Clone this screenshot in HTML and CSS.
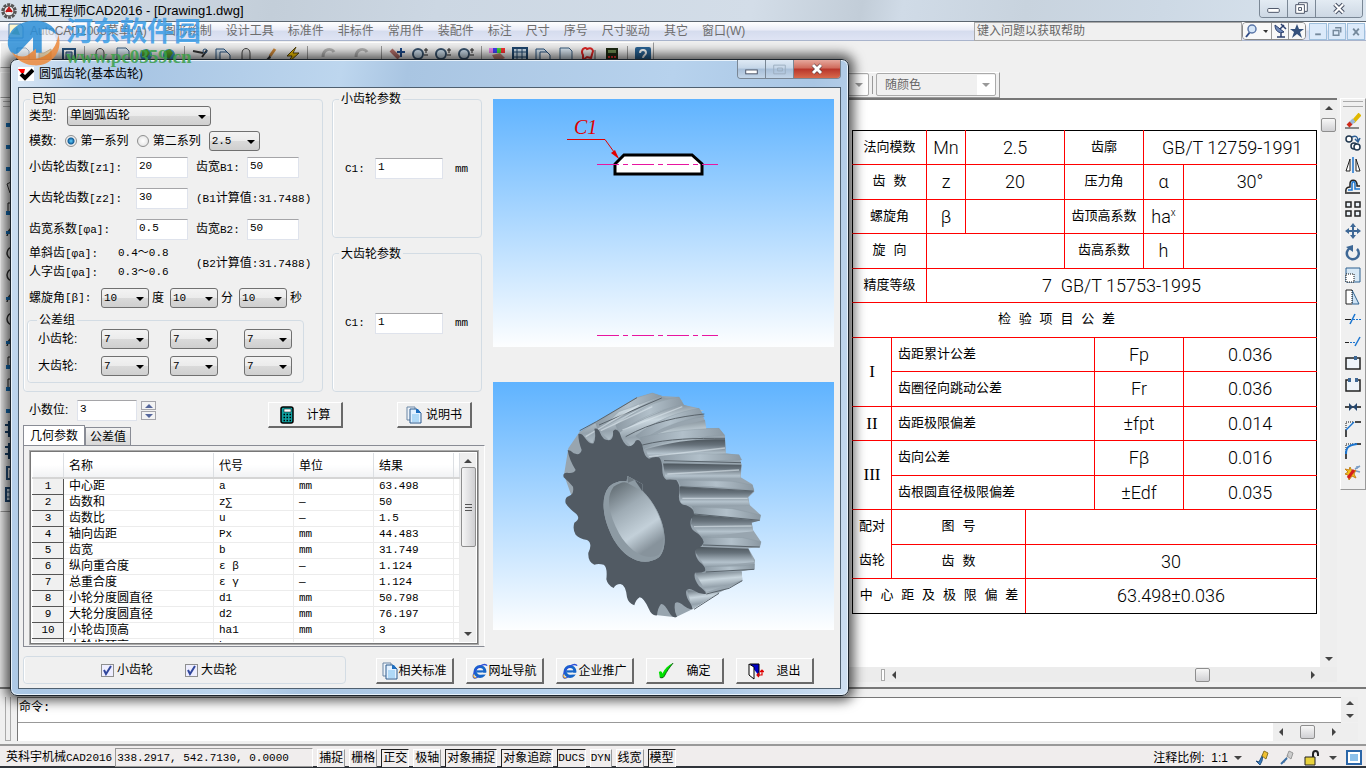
FILE: index.html
```html
<!DOCTYPE html>
<html lang="zh-CN">
<head>
    <meta charset="UTF-8">
    <title>机械工程师CAD2016 - [Drawing1.dwg]</title>
    <link rel="stylesheet" href="styles.css">
</head>
<body>
    <!-- shared icons -->
    <svg class="defs" aria-hidden="true">
        <symbol id="i-new" viewBox="0 0 16 16"><path d="M2 1h9l3 3v11H2z" fill="#dceaf5" stroke="#3b5e80"/></symbol>
        <symbol id="i-open" viewBox="0 0 16 16"><path d="M1 6h5l7-4v12H1z" fill="#d9a441" stroke="#8a5a14"/></symbol>
        <symbol id="i-save" viewBox="0 0 16 16"><path d="M2 2h12v12H2z" fill="#fff" stroke="#27517c" stroke-width="2"/><path d="M5 5h6v9H5z" fill="#9db8d2" stroke="#27517c"/></symbol>
        <symbol id="i-print" viewBox="0 0 16 16"><path d="M4 6c0-6 8-6 8 0v8H4z" fill="#ddd" stroke="#444"/></symbol>
        <symbol id="i-globe" viewBox="0 0 16 16"><circle cx="8" cy="8" r="6" fill="#3d9bd6"/><path d="M4 4l5-2 3 4-4 6-4-3z" fill="#58a42c"/></symbol>
        <symbol id="i-cut" viewBox="0 0 16 16"><path d="M1 4l10 2M10 10L15 3" stroke="#333" stroke-width="2"/><circle cx="13" cy="4" r="2" fill="none" stroke="#27517c"/></symbol>
        <symbol id="i-copy" viewBox="0 0 16 16"><path d="M1 2h8l3 3v8H1z" fill="#dceaf5" stroke="#27517c"/><path d="M5 5h7l3 3v8H5z" fill="#fff" stroke="#27517c"/></symbol>
        <symbol id="i-brush" viewBox="0 0 16 16"><path d="M14 2l-5 7" stroke="#d08a3a" stroke-width="3"/><path d="M9 8l-6 7 7-4z" fill="#333"/></symbol>
        <symbol id="i-bolt" viewBox="0 0 16 16"><path d="M12 0L3 9h5l-4 7 11-10H9z" fill="#f5c400" stroke="#55430a"/></symbol>
        <symbol id="i-undo" viewBox="0 0 16 16"><path d="M3 10c0-9 9-9 11-5" fill="none" stroke="#b5b5b5" stroke-width="3"/></symbol>
        <symbol id="i-pan" viewBox="0 0 16 16"><path d="M2 3l8 8" stroke="#b5706a" stroke-width="4"/><path d="M12 1v9M8 5h8" stroke="#1d4a8a" stroke-width="2"/></symbol>
        <symbol id="i-lens" viewBox="0 0 16 16"><circle cx="6" cy="7" r="5" fill="#cfe0ee" stroke="#38536e" stroke-width="2"/><path d="M12 3h4M14 1v5M12 8h4" stroke="#222"/></symbol>
        <symbol id="i-pal" viewBox="0 0 16 16"><path d="M0 1h4v5H0z" fill="#e8e"/><path d="M4 1h4v5H4z" fill="#44f"/><path d="M8 1h4v5H8z" fill="#4d4"/><path d="M12 1h4v5h-4z" fill="#f33"/><path d="M3 8l8-2 5 5-9 4z" fill="#c48476"/></symbol>
        <symbol id="i-grid" viewBox="0 0 16 16"><path d="M1 1h14v13H1z" fill="#cfe0ee" stroke="#1e466e" stroke-width="2"/><path d="M1 5h14M5 1v13M10 1v13M1 10h14" stroke="#1e466e"/></symbol>
        <symbol id="i-cloud" viewBox="0 0 16 16"><path d="M2 2q3-2 4 0q5-2 6 2l-2 7-4-1-4 3V8Q0 5 2 2z" fill="none" stroke="#e02424" stroke-width="2"/><path d="M14 3v9" stroke="#555"/></symbol>
        <symbol id="i-dcalc" viewBox="0 0 16 16"><path d="M2 1h12v14H2z" fill="#1e2a12"/><path d="M4 3h8v3H4z" fill="#6d8a50"/><path d="M4 9h2v2H4zM7 9h2v2H7zM10 9h2v2h-2z" fill="#e33"/></symbol>
        <symbol id="i-help" viewBox="0 0 16 16"><rect width="16" height="16" rx="2" fill="#2a6496"/><path d="M5 6c0-4 6-4 6 0 0 2-3 2-3 5" fill="none" stroke="#fff" stroke-width="2"/></symbol>
        <symbol id="i-doc" viewBox="0 0 16 18"><path d="M1 1h8v13H1z" fill="#eef4fa" stroke="#6b86a5"/><path d="M4 3h7l4 4v10H4z" fill="#e3f1ff" stroke="#2c5a8c"/><path d="M10 3h2l3 4h-5z" fill="#1f6fc0"/><path d="M6 9h7M6 11h7M6 13h7M6 15h7" stroke="#7cc0ee"/></symbol>
        <symbol id="i-calc" viewBox="0 0 14 18"><rect x="1" y="1" width="12" height="16" rx="2" fill="#0fa3a3" stroke="#000" stroke-width="1.500"/><path d="M4 3h7v3H4z" fill="#fff" stroke="#000" stroke-width="0.500"/><path d="M3.500 8.500h8M3.500 11.500h8M3.500 14.500h8" stroke="#000" stroke-width="1.500" stroke-dasharray="1.500 1.500"/></symbol>
        <symbol id="i-ie" viewBox="0 0 18 18"><circle cx="9" cy="9.500" r="5.500" fill="none" stroke="#1565c8" stroke-width="3.500"/><path d="M5 9.500h10" stroke="#1565c8" stroke-width="2.500"/><path d="M11 12h6" stroke="#f0f0f0" stroke-width="2"/><path d="M17 3c-3-4-13 2-15 9-2 6 2 6 5 3" fill="none" stroke="#2b4fd8" stroke-width="1.600"/><path d="M2 13c-1 3 1 4 3 3" fill="none" stroke="#d4a54a" stroke-width="1.500"/></symbol>
        <symbol id="i-ok" viewBox="0 0 18 18"><path d="M1 10c2-2 4 0 4 2 3-6 6-9 12-12-4 5-7 9-10 15-1 2-4 2-5 1z" fill="#00e000"/><path d="M17 0c-4 5-7 9-10 15-1 2-4 2-5 1" fill="none" stroke="#064d06"/></symbol>
        <symbol id="i-exit" viewBox="0 0 16 18"><path d="M2 2h9v12" fill="#0000c8" stroke="#000"/><path d="M1 2l5 3v12l-5-4z" fill="#fff" stroke="#000"/><path d="M9 13h5V8M11 11l-2 2 2 2M12 10l2-2 2 2" stroke="#e00000" stroke-width="1.200" fill="none"/></symbol>
        <symbol id="i-line" viewBox="0 0 16 16"><path d="M3 12L13 3" stroke="#222"/><path d="M1 10h4v4H1z" fill="#1670b8"/></symbol>
        <symbol id="i-circ" viewBox="0 0 16 16"><circle cx="8" cy="8" r="6" fill="none" stroke="#333" stroke-width="1.500"/></symbol>
        <symbol id="i-pent" viewBox="0 0 16 16"><path d="M2 5l6-3 6 4-2 8H5z" fill="#ddd" stroke="#333"/></symbol>
        <symbol id="i-rect" viewBox="0 0 16 16"><path d="M3 2h11v9H3z" fill="none" stroke="#222"/><path d="M1 10h4v4H1z" fill="#1670b8"/></symbol>
        <symbol id="i-arc" viewBox="0 0 16 16"><path d="M2 13C3 5 8 3 14 3" fill="none" stroke="#333" stroke-width="1.500"/><path d="M1 8h4v3H1z" fill="#1670b8"/></symbol>
        <symbol id="i-hatch" viewBox="0 0 16 16"><path d="M4 0v16M0 4h16M0 11h16M11 0v16" stroke="#173f66" stroke-width="2"/></symbol>
    </svg>

    <div class="app">
        <header class="titlebar">
            <svg class="gear-ico" viewBox="0 0 16 16"><circle cx="8" cy="8" r="6.500" fill="#ddd" stroke="#555" stroke-width="2.500" stroke-dasharray="3 1"/><circle cx="8" cy="8" r="5" fill="#eee" stroke="#333"/><path d="M5 9l3-4 3 4M5 8h6" fill="none" stroke="#c01818" stroke-width="2"/></svg>
            <span class="app-name">机械工程师CAD2016 - [Drawing1.dwg]</span>
            <div class="win-btns">
                <button aria-label="最小化"><svg viewBox="0 0 28 16"><rect x="8" y="8" width="12" height="4" rx="1" fill="#fff" stroke="#4a5366"/></svg></button>
                <button aria-label="还原"><svg viewBox="0 0 28 16"><path d="M11 2h9v9h-9z" fill="#fff" stroke="#4a5366"/><path d="M8 4h9v9H8z" fill="#fff" stroke="#4a5366"/><path d="M11 7h3v3h-3z" fill="none" stroke="#4a5366"/></svg></button>
                <button class="wide" aria-label="关闭"><svg viewBox="0 0 28 16"><path d="M10 4l8 8M18 4l-8 8" stroke="#4a5366" stroke-width="4"/><path d="M10 4l8 8M18 4l-8 8" stroke="#fff" stroke-width="2"/></svg></button>
            </div>
        </header>

        <nav class="menubar">
            <svg class="mdi-ico" viewBox="0 0 16 16"><path d="M1 1h12l2 3v11H1z" fill="#fff6cc" stroke="#3f6ea3"/><path d="M3 11l6-7 3 8z" fill="#7fa63a"/></svg>
            <a class="first" href="#">AutoCAD2008菜单(A)</a>
            <a href="#">图形绘制</a>
            <a href="#">设计工具</a>
            <a href="#">标准件</a>
            <a href="#">非标件</a>
            <a href="#">常用件</a>
            <a href="#">装配件</a>
            <a href="#">标注</a>
            <a href="#">尺寸</a>
            <a href="#">序号</a>
            <a href="#">尺寸驱动</a>
            <a href="#">其它</a>
            <a href="#">窗口(W)</a>
            <input class="help-search" type="text" placeholder="键入问题以获取帮助" aria-label="帮助搜索">
            <div class="help-btns">
                <button class="find" aria-label="搜索"><svg viewBox="0 0 28 16"><path d="M7 9l-4 5" stroke="#2e4a86" stroke-width="2"/><circle cx="9" cy="6" r="4" fill="#d5e6f8" stroke="#5a76a8" stroke-width="1.500"/><path d="M20 7h5l-2 3z" fill="#333"/></svg></button>
                <button aria-label="通讯中心"><svg viewBox="0 0 16 16"><path d="M3 2c0 6 4 9 9 7z" fill="#6d87b8" stroke="#2c406e"/><path d="M8 6l4-4M9 1l5 5M5 14h8M9 10v4" stroke="#2c406e" stroke-width="1.500"/></svg></button>
                <button aria-label="收藏夹"><svg viewBox="0 0 16 16"><path d="M8 1l2 5h5l-4 3 2 6-5-4-5 4 2-6-4-3h5z" fill="#34507c"/></svg></button>
            </div>
            <div class="mdi-btns">
                <button aria-label="最小化窗口"><svg viewBox="0 0 16 16"><path d="M5 11h6" stroke="#75899c" stroke-width="2"/></svg></button>
                <button aria-label="还原窗口"><svg viewBox="0 0 16 16"><path d="M6 4h6v5M4 7h6v5H4z" fill="none" stroke="#75899c" stroke-width="1.500"/></svg></button>
                <button aria-label="关闭窗口"><svg viewBox="0 0 16 16"><path d="M5 5l6 7M11 5l-6 7" stroke="#75899c" stroke-width="2"/></svg></button>
            </div>
        </nav>

        <div class="toolbars">
            <div class="toolbar std">
                <svg><use href="#i-new"/></svg><svg><use href="#i-open"/></svg><svg><use href="#i-save"/></svg><i></i>
                <svg><use href="#i-print"/></svg><svg><use href="#i-new"/></svg><svg><use href="#i-globe"/></svg><svg><use href="#i-globe"/></svg><i></i>
                <svg><use href="#i-cut"/></svg><svg><use href="#i-copy"/></svg><svg><use href="#i-print"/></svg><svg><use href="#i-brush"/></svg><svg><use href="#i-bolt"/></svg><i></i>
                <svg class="wide"><use href="#i-undo"/></svg><svg class="wide"><use href="#i-undo"/></svg><i></i>
                <svg><use href="#i-pan"/></svg><svg><use href="#i-lens"/></svg><svg><use href="#i-lens"/></svg><svg><use href="#i-lens"/></svg><i></i>
                <svg><use href="#i-pal"/></svg><svg><use href="#i-grid"/></svg><svg><use href="#i-copy"/></svg><svg><use href="#i-new"/></svg><svg><use href="#i-cloud"/></svg><svg><use href="#i-dcalc"/></svg><i></i>
                <svg><use href="#i-help"/></svg>
            </div>
            <div class="toolbar props">
                <select class="combo" disabled aria-label="图层"><option>0</option></select>
                <i></i>
                <select class="combo color" disabled aria-label="颜色"><option>随颜色</option></select>
            </div>
        </div>

        <main class="workspace">
            <aside class="vtools draw">
                <b></b>
                <svg><use href="#i-line"/></svg><svg><use href="#i-line"/></svg><svg><use href="#i-line"/></svg><svg><use href="#i-pent"/></svg><svg><use href="#i-rect"/></svg><svg><use href="#i-arc"/></svg><svg><use href="#i-circ"/></svg><svg><use href="#i-circ"/></svg><svg><use href="#i-arc"/></svg><svg><use href="#i-circ"/></svg><svg><use href="#i-arc"/></svg><svg><use href="#i-rect"/></svg><svg><use href="#i-rect"/></svg><svg><use href="#i-line"/></svg><svg><use href="#i-hatch"/></svg><svg><use href="#i-hatch"/></svg><svg><use href="#i-save"/></svg><svg><use href="#i-grid"/></svg>
            </aside>

            <section class="drawing">
                <div class="canvas">
                    <table class="cad">
                        <colgroup><col class="c39"><col class="c35"><col class="c39"><col class="c60"><col class="c39"><col class="c30"><col class="c49"><col class="c40"><col></colgroup>
                        <tr><th colspan="2">法向模数</th><td>Mn</td><td colspan="2">2.5</td><th colspan="2">齿廓</th><td colspan="2">&nbsp;GB/T 12759-1991</td></tr>
                        <tr><th colspan="2">齿 数</th><td>z</td><td colspan="2">20</td><th colspan="2">压力角</th><td>α</td><td>30°</td></tr>
                        <tr><th colspan="2">螺旋角</th><td>β</td><td colspan="2"></td><th colspan="2">齿顶高系数</th><td>ha<sup>x</sup></td><td></td></tr>
                        <tr><th colspan="2">旋 向</th><td colspan="3"></td><th colspan="2">齿高系数</th><td>h</td><td></td></tr>
                        <tr><th colspan="2">精度等级</th><td colspan="7">7&nbsp; GB/T 15753-1995</td></tr>
                        <tr><th class="head" colspan="9">检 验 项 目 公 差</th></tr>
                        <tr><th class="roman" rowspan="2">I</th><th class="left" colspan="5">齿距累计公差</th><td colspan="2">Fp</td><td>0.036</td></tr>
                        <tr><th class="left" colspan="5">齿圈径向跳动公差</th><td colspan="2">Fr</td><td>0.036</td></tr>
                        <tr><th class="roman">II</th><th class="left" colspan="5">齿距极限偏差</th><td colspan="2">±fpt</td><td>0.014</td></tr>
                        <tr><th class="roman" rowspan="2">III</th><th class="left" colspan="5">齿向公差</th><td colspan="2">Fβ</td><td>0.016</td></tr>
                        <tr><th class="left" colspan="5">齿根圆直径极限偏差</th><td colspan="2">±Edf</td><td>0.035</td></tr>
                        <tr><th class="pair" rowspan="2">配对<br>齿轮</th><th colspan="3">图 号</th><td colspan="5"></td></tr>
                        <tr><th colspan="3">齿 数</th><td colspan="5">30</td></tr>
                        <tr><th colspan="4">中 心 距 及 极 限 偏 差</th><td colspan="5">63.498±0.036</td></tr>
                    </table>
                </div>
                <div class="vscroll"><span class="arr up"></span><span class="thumb"></span><span class="arr down"></span></div>
                <div class="hscroll"><span class="split"></span><span class="arr lt"></span><span class="thumb"></span><span class="arr rt"></span></div>
            </section>

            <aside class="vtools modify">
                <b></b>
                <svg viewBox="0 0 16 16"><path d="M15 1l-7 8" stroke="#e0b800" stroke-width="4"/><path d="M9 7l-4 4" stroke="#9cb8d8" stroke-width="4"/><path d="M6 10l-3 3" stroke="#d02a1a" stroke-width="4"/><path d="M0 15h14" stroke="#222"/></svg>
                <svg viewBox="0 0 16 16"><circle cx="4" cy="4" r="3" fill="#fff" stroke="#22384f" stroke-width="1.500"/><circle cx="9" cy="11" r="3" fill="#fff" stroke="#22384f" stroke-width="1.500"/><circle cx="12" cy="12" r="3" fill="#fff" stroke="#22384f" stroke-width="1.500"/><path d="M7 2c4-2 6 0 6 4M10 4l3 3 2-4" fill="none" stroke="#2c5f96" stroke-width="1.500"/></svg>
                <svg viewBox="0 0 16 16"><path d="M5 2v12H1zM11 2v12h4z" fill="#fff" stroke="#222"/><path d="M8 0v16" stroke="#1b75d0" stroke-width="1.500"/></svg>
                <svg viewBox="0 0 16 16"><path d="M0 14h15M1 13c-1-5 3-5 4-5V5c0-5 6-5 7 0v2h3" fill="none" stroke="#222" stroke-width="1.500"/><path d="M3 11h4V5c0-3 3-3 3 0v5h5" fill="none" stroke="#1b75d0" stroke-width="1.500"/></svg>
                <svg viewBox="0 0 16 16"><path d="M1 1h5v5H1zM10 1h5v5h-5zM1 10h5v5H1zM10 10h5v5h-5z" fill="#eaf2fa" stroke="#222" stroke-width="1.500"/></svg>
                <svg viewBox="0 0 16 16"><path d="M8 2v12M2 8h12" stroke="#3e6896" stroke-width="2"/><path d="M8 0l3 4H5zM8 16l3-4H5zM0 8l4-3v6zM16 8l-4-3v6z" fill="#3e6896"/></svg>
                <svg viewBox="0 0 16 16"><path d="M5 3a6 6 0 1 0 7 1" fill="none" stroke="#3e6896" stroke-width="2.500"/><path d="M1 2l7-2v7z" fill="#3e6896"/></svg>
                <svg viewBox="0 0 16 16"><path d="M1 1h14v14H1z" fill="#d8e9f6" stroke="#2c6190"/><path d="M1 7h8v8H1z" fill="#fff" stroke="#111" stroke-dasharray="1 1"/></svg>
                <svg viewBox="0 0 16 16"><path d="M7 1l7 14H7z" fill="#cfe3f4" stroke="#2c6190"/><path d="M7 1H1v14h6" fill="#fff" stroke="#222"/><path d="M7 1v14" stroke="#111" stroke-dasharray="1 1"/></svg>
                <svg viewBox="0 0 16 16"><path d="M0 8.500h6" stroke="#222"/><path d="M8 8.500h8" stroke="#1b75d0" stroke-dasharray="2 1"/><path d="M5 13L10 3" stroke="#1b75d0" stroke-width="1.500"/></svg>
                <svg viewBox="0 0 16 16"><path d="M0 9.500h4" stroke="#222"/><path d="M5 9.500h6" stroke="#1b75d0" stroke-dasharray="2 1"/><path d="M10 13l5-9" stroke="#1b75d0" stroke-width="1.500"/></svg>
                <svg viewBox="0 0 16 16"><path d="M1 3h14v11H1z" fill="#eef4fa" stroke="#222" stroke-width="1.500"/><path d="M9 1h3v4H9z" fill="#3e6896"/></svg>
                <svg viewBox="0 0 16 16"><path d="M4 3H1v11h14V3h-3" fill="#eef4fa" stroke="#222" stroke-width="1.500"/><path d="M3 1h3v4H3zM10 1h3v4h-3z" fill="#3e6896"/></svg>
                <svg viewBox="0 0 16 16"><path d="M0 8h16" stroke="#111" stroke-width="1.500"/><path d="M4 4l4 4-4 4zM12 4L8 8l4 4z" fill="#24476e"/></svg>
                <svg viewBox="0 0 16 16"><path d="M1 16V9M10 1h6" stroke="#111" stroke-width="1.500"/><path d="M1 9V1h8" fill="none" stroke="#111" stroke-dasharray="1 1"/><path d="M1 9l8-8" stroke="#1b75d0" stroke-width="1.500"/></svg>
                <svg viewBox="0 0 16 16"><path d="M1 16V9M10 1h6" stroke="#111" stroke-width="1.500"/><path d="M1 9V1h8" fill="none" stroke="#111" stroke-dasharray="1 1"/><path d="M1 11C1 4 4 2 12 1" fill="none" stroke="#1b75d0" stroke-width="2"/></svg>
                <svg viewBox="0 0 16 16"><path d="M0 4l4 1 1-3 2 4 4-1-2 4 2 4-4-2-3 4-1-5-3-1 3-2z" fill="#f3c21c" stroke="#c4831c"/><path d="M3 13L9 5" stroke="#d42020" stroke-width="3"/><path d="M10 4l5-3M11 6l4 1M12 1v3" stroke="#7a9cc4" stroke-width="1.500"/></svg>
            </aside>
        </main>

        <section class="command">
            <b class="grip"></b>
            <div class="cmd-box">
                <label for="cmd">命令:</label>
                <input id="cmd" type="text">
            </div>
            <div class="cmd-scroll">
                <span class="arr up"></span><span class="arr down"></span>
            </div>
            <div class="cmd-hscroll"><span class="arr lt"></span><span class="thumb"></span><span class="arr rt"></span></div>
        </section>

        <footer class="status">
            <span>英科宇机械<span class="num">CAD2016</span></span>
            <output class="coords">338.2917, 542.7130, 0.0000</output>
            <div class="modes">
                <button>捕捉</button>
                <button>栅格</button>
                <button class="on">正交</button>
                <button>极轴</button>
                <button class="on">对象捕捉</button>
                <button class="on">对象追踪</button>
                <button class="on num">DUCS</button>
                <button class="num">DYN</button>
                <button>线宽</button>
                <button class="on">模型</button>
            </div>
            <span class="scale">注释比例:&nbsp; 1:1 <span class="arr down"></span></span>
            <div class="tray">
                <svg viewBox="0 0 16 16"><path d="M9 4l-4 8-3-1 4 4 2-4z" fill="#3b7fc4" stroke="#24507e"/><path d="M10 1l4 2-2 6-4-3z" fill="#f0c030" stroke="#8b7420"/></svg>
                <svg viewBox="0 0 16 16"><path d="M10 1l4 2-2 6-4-3zM9 5l-4 8" fill="#ccc" stroke="#999"/><path d="M2 14l6-6" stroke="#3b6fa4" stroke-width="2"/></svg>
                <svg viewBox="0 0 16 16"><path d="M9 7V4c0-4 5-4 5 0v2" fill="none" stroke="#222" stroke-width="2"/><path d="M1 7h10v8H1z" fill="#e8d23c" stroke="#222"/></svg>
                <span class="arr down"></span>
                <svg viewBox="0 0 16 16"><path d="M1 1h14v13H1z" fill="#fff" stroke="#2b66a8" stroke-width="2"/><path d="M4 4h8v7H4z" fill="#8cc0ea"/></svg>
            </div>
        </footer>
    </div>

    <!-- gear dialog -->
    <div class="dialog" role="dialog" aria-labelledby="dlg-title">
        <div class="dlg-title">
            <svg viewBox="0 0 16 14"><path d="M0 0h16v14H0z" fill="#fff"/><path d="M3 7l4 4 8-8" fill="none" stroke="#000" stroke-width="4"/><path d="M0 2h7l-1 4H3z" fill="#f00"/></svg>
            <span id="dlg-title">圆弧齿轮(基本齿轮)</span>
            <div class="win-btns">
                <button aria-label="最小化"><svg viewBox="0 0 28 18"><rect x="8" y="10" width="12" height="4" fill="#fff" stroke="#4a5366"/></svg></button>
                <button disabled aria-label="最大化"><svg viewBox="0 0 28 18"><path d="M8 5h12v9H8zM12 8h5v3h-5z" fill="none" stroke="#9caebf"/></svg></button>
                <button class="wide close" aria-label="关闭"><svg viewBox="0 0 28 18"><path d="M10 5l8 8M18 5l-8 8" stroke="#54363a" stroke-width="4"/><path d="M10 5l8 8M18 5l-8 8" stroke="#fff" stroke-width="3"/></svg></button>
            </div>
        </div>

        <form class="client">
            <div class="cols">
                <div class="left">
                    <div class="params">
                        <fieldset class="known">
                            <legend>已知</legend>
                            <div class="row type">
                                <label for="type">类型:</label>
                                <select id="type"><option>单圆弧齿轮</option></select>
                            </div>
                            <div class="row modulus">
                                <span>模数:</span>
                                <label><input type="radio" name="series" checked>第一系列</label>
                                <label><input type="radio" name="series">第二系列</label>
                                <select aria-label="模数"><option>2.5</option></select>
                            </div>
                            <div class="teeth">
                                <label for="z1">小齿轮齿数<span class="num">[z1]:</span></label>
                                <input id="z1" value="20">
                                <label class="second" for="b1">齿宽<span class="num">B1:</span></label>
                                <input id="b1" value="50">
                                <label for="z2">大齿轮齿数<span class="num">[z2]:</span></label>
                                <input id="z2" value="30">
                                <span class="second calc"><span class="num">(B1</span>计算值<span class="num">:31.7488)</span></span>
                                <label for="phi">齿宽系数<span class="num">[φa]:</span></label>
                                <input id="phi" value="0.5">
                                <label class="second" for="b2">齿宽<span class="num">B2:</span></label>
                                <input id="b2" value="50">
                            </div>
                            <div class="hints">
                                <span>单斜齿<span class="num">[φa]:</span></span><span class="num">0.4～0.8</span>
                                <span class="calc"><span class="num">(B2</span>计算值<span class="num">:31.7488)</span></span>
                                <span>人字齿<span class="num">[φa]:</span></span><span class="num">0.3～0.6</span>
                            </div>
                            <div class="row helix">
                                <label for="deg">螺旋角<span class="num">[β]:</span></label>
                                <select id="deg"><option>10</option></select><span>度</span>
                                <select aria-label="分"><option>10</option></select><span>分</span>
                                <select aria-label="秒"><option>10</option></select><span>秒</span>
                            </div>
                            <fieldset class="group">
                                <legend>公差组</legend>
                                <span>小齿轮:</span>
                                <select aria-label="小齿轮 公差组 1"><option>7</option></select>
                                <select aria-label="小齿轮 公差组 2"><option>7</option></select>
                                <select aria-label="小齿轮 公差组 3"><option>7</option></select>
                                <span>大齿轮:</span>
                                <select aria-label="大齿轮 公差组 1"><option>7</option></select>
                                <select aria-label="大齿轮 公差组 2"><option>7</option></select>
                                <select aria-label="大齿轮 公差组 3"><option>7</option></select>
                            </fieldset>
                        </fieldset>
                        <div class="side">
                            <fieldset>
                                <legend>小齿轮参数</legend>
                                <div class="row"><label class="num" for="c1a">C1:</label><input id="c1a" value="1"><span class="num">mm</span></div>
                            </fieldset>
                            <fieldset>
                                <legend>大齿轮参数</legend>
                                <div class="row"><label class="num" for="c1b">C1:</label><input id="c1b" value="1"><span class="num">mm</span></div>
                            </fieldset>
                        </div>
                    </div>

                    <div class="row actions">
                        <label for="prec">小数位:</label>
                        <input id="prec" value="3">
                        <div class="spin">
                            <button type="button" aria-label="增加"><span class="arr up"></span></button>
                            <button type="button" aria-label="减少"><span class="arr down"></span></button>
                        </div>
                        <button type="button" class="btn calc-btn"><svg><use href="#i-calc"/></svg>计算</button>
                        <button type="button" class="btn"><svg><use href="#i-doc"/></svg>说明书</button>
                    </div>

                    <div class="tabs" role="tablist">
                        <button type="button" role="tab" aria-selected="true">几何参数</button>
                        <button type="button" role="tab" aria-selected="false">公差值</button>
                    </div>
                    <div class="panel">
                        <div class="list">
                            <div class="rows">
                                <table class="grid">
                                    <thead>
                                        <tr><th class="w-no"></th><th class="w-name">名称</th><th class="w-col">代号</th><th class="w-col">单位</th><th class="w-col">结果</th><th></th></tr>
                                    </thead>
                                    <tbody>
                                        <tr><th>1</th><td>中心距</td><td>a</td><td>mm</td><td>63.498</td><td></td></tr>
                                        <tr><th>2</th><td>齿数和</td><td>z∑</td><td>—</td><td>50</td><td></td></tr>
                                        <tr><th>3</th><td>齿数比</td><td>u</td><td>—</td><td>1.5</td><td></td></tr>
                                        <tr><th>4</th><td>轴向齿距</td><td>Px</td><td>mm</td><td>44.483</td><td></td></tr>
                                        <tr><th>5</th><td>齿宽</td><td>b</td><td>mm</td><td>31.749</td><td></td></tr>
                                        <tr><th>6</th><td>纵向重合度</td><td>ε β</td><td>—</td><td>1.124</td><td></td></tr>
                                        <tr><th>7</th><td>总重合度</td><td>ε γ</td><td>—</td><td>1.124</td><td></td></tr>
                                        <tr><th>8</th><td>小轮分度圆直径</td><td>d1</td><td>mm</td><td>50.798</td><td></td></tr>
                                        <tr><th>9</th><td>大轮分度圆直径</td><td>d2</td><td>mm</td><td>76.197</td><td></td></tr>
                                        <tr><th>10</th><td>小轮齿顶高</td><td>ha1</td><td>mm</td><td>3</td><td></td></tr>
                                        <tr><th></th><td>大轮齿顶高</td><td>ha2</td><td>mm</td><td>3</td><td></td></tr>
                                    </tbody>
                                </table>
                            </div>
                            <div class="vscroll"><span class="arr up"></span><span class="thumb"></span><span class="arr down"></span></div>
                        </div>
                    </div>
                </div>

                <div class="previews">
                    <svg viewBox="0 0 341 248" role="img" aria-label="齿轮简图">
                        <text x="81" y="35" class="c1-text">C1</text>
                        <path d="M74 40.500h38l13 18" fill="none" stroke="#e00000"/>
                        <path d="M126 60l-8-6 4-3z" fill="#e00000"/>
                        <path d="M122 75V65l9-9h68l10 9v10z" fill="#fff" stroke="#000" stroke-width="3"/>
                        <path d="M104 65.500h121M104 236.500h121" stroke="#e815a0" stroke-dasharray="22 4 5 4"/>
                    </svg>
                    <svg viewBox="42 36 1023 744" role="img" aria-label="斜齿轮三维图">
                        <defs>
                            <linearGradient id="bore" x1="0" y1="0" x2="0.500" y2="1"><stop offset="0" stop-color="#596369"/><stop offset="0.400" stop-color="#9eabb4"/><stop offset="0.750" stop-color="#c3d0d9"/><stop offset="1" stop-color="#87939c"/></linearGradient>
                            <linearGradient id="gap" x1="0" y1="0" x2="0" y2="1"><stop offset="0" stop-color="#4c555c"/><stop offset="0.300" stop-color="#66717a"/><stop offset="0.750" stop-color="#b4c2cc"/><stop offset="1" stop-color="#8c99a3"/></linearGradient>
                            <linearGradient id="gap2" x1="0.400" y1="0" x2="0.600" y2="1"><stop offset="0" stop-color="#7b8790"/><stop offset="0.350" stop-color="#c9d6de"/><stop offset="0.700" stop-color="#95a2ac"/><stop offset="1" stop-color="#bccad3"/></linearGradient>
                            <linearGradient id="crest" x1="0" y1="0" x2="1" y2="0"><stop offset="0" stop-color="#8d9aa4"/><stop offset="0.500" stop-color="#b2c0ca"/><stop offset="1" stop-color="#8b98a2"/></linearGradient>
                        </defs>
                        <!-- body behind the teeth -->
                        <path d="M268 235L302 185 352 155 470 84 520 69 548 78 600 81 615 105 660 115 677 150 680 175 720 175 738 197 740 250 780 255 788 285 785 322 820 343 826 365 808 382 812 405 845 435 842 452 818 456 822 480 846 515 842 532 808 535 828 570 826 596 788 604 790 633 720 668 640 718 590 742 530 735 300 440 255 315z" fill="#98a5af"/>
                        <!-- tooth gaps -->
                        <path d="M302 190L352 158 520 72 545 78 355 175 340 220z" fill="url(#gap2)"/>
                        <path d="M358 180L548 82 612 92 415 182 390 210z" fill="url(#gap2)"/>
                        <path d="M418 190C500 140 560 120 615 105L675 122C580 140 530 175 482 208L458 230z" fill="url(#gap2)"/>
                        <path d="M490 215C550 180 610 165 678 150L682 178 735 190C660 198 600 220 548 262L510 265z" fill="url(#gap2)"/>
                        <path d="M500 238C580 215 650 205 738 208L740 250 550 262 510 265z" fill="url(#gap)"/>
                        <path d="M552 280L787 284 784 325 602 330 560 328z" fill="url(#gap)"/>
                        <path d="M602 350L824 364 806 382 812 408 642 410 605 400z" fill="url(#gap)"/>
                        <path d="M640 432L840 452 818 458 822 484 670 502 636 462z" fill="url(#gap)"/>
                        <path d="M650 530L808 536 826 576 680 592 650 548z" fill="url(#gap)"/>
                        <path d="M648 608L788 606 790 630 682 666z" fill="url(#gap2)"/>
                        <path d="M624 660L720 668 640 716z" fill="url(#gap2)"/>
                        <!-- crests -->
                        <g fill="url(#crest)" stroke="#87949e" stroke-width="1">
                            <path d="M350 160L470 84 520 69 548 78 420 125 358 182z"/>
                            <path d="M410 165C470 120 530 92 600 81L614 104C540 118 470 150 420 188z"/>
                            <path d="M470 198C530 150 600 125 660 115L676 140C600 150 540 175 490 212z"/>
                            <path d="M538 256C600 250 690 250 780 254L788 270C700 272 620 276 552 280z"/>
                            <path d="M484 202C560 185 650 176 720 175L737 196C650 200 560 212 494 236z"/>
                            <path d="M598 330L760 334 820 345 825 361 700 350 606 348z"/>
                            <path d="M640 410L760 416 845 435 842 450 740 440 650 434z"/>
                            <path d="M668 502L790 503 846 515 842 532 760 526 674 524z"/>
                            <path d="M676 590L790 588 826 582 826 597 770 604 682 606z"/>
                        </g>
                        <g fill="none" stroke="#59636b" stroke-width="3">
                            <path d="M302 182L352 155 474 83M360 165L548 84M440 200C520 155 600 140 676 132M490 225C570 205 650 205 738 205M555 272L786 278M604 350L824 363M645 432L842 451M672 525L842 531M680 606L826 598M682 672L750 655 790 632M645 718L720 670"/>
                        </g>
                        <g fill="none" stroke="#dce6ec" stroke-width="4" opacity="0.600">
                            <path d="M365 182L520 110M430 180L610 110M510 260L738 234M565 312L780 300M610 385L806 385M645 470L818 468M320 200L480 105"/>
                        </g>
                        <!-- front face -->
                        <path fill="#515a63" fill-rule="evenodd" d="M346 176Q358 172 364 190Q372 212 390 211Q404 210 402 184Q410 172 422 188Q432 222 448 229Q464 228 470 212Q482 204 490 226Q496 264 510 266Q526 258 540 262Q550 272 550 300Q550 322 562 329Q580 328 592 330Q606 348 600 376Q598 398 612 404Q632 406 642 420Q650 434 636 448Q630 470 646 484Q670 498 674 516Q672 530 652 536Q644 556 662 576Q682 590 678 604Q664 610 648 608Q642 624 660 648Q684 666 680 672Q664 674 646 662Q628 652 622 662Q618 676 634 700Q642 714 640 718Q626 718 608 702Q594 692 588 700Q584 722 594 740Q582 746 572 730Q556 700 546 702Q536 714 534 736Q518 738 510 718Q494 682 482 682Q470 690 466 706Q448 700 444 682Q440 644 424 642Q410 642 404 654Q386 646 382 628Q386 592 374 584Q358 580 346 584Q326 576 328 548Q342 520 324 510Q300 506 290 494Q280 478 286 458Q306 446 292 432Q266 412 260 400Q256 382 270 378Q286 372 282 350Q268 334 254 322Q250 308 264 308Q284 312 290 300Q270 268 266 240Q274 240 284 250Q304 258 308 240Q298 214 298 192Q308 188 318 204Q332 224 344 220Q352 204 346 176z
                            M390 350Q415 330 443 334L445 318L490 342V362C560 430 572 530 540 562C500 590 445 575 405 510C372 450 362 385 390 350z"/>
                        <path d="M390 350Q415 330 443 334L445 318L490 342V362C560 430 572 530 540 562C500 590 445 575 405 510C372 450 362 385 390 350z" fill="#8d9aa3"/>
                        <path d="M404 350Q430 332 444 338L490 364C556 430 568 520 540 554C500 575 452 545 420 490C388 430 380 380 404 350z" fill="url(#bore)"/>
                        <path d="M467 330l23 12v22z" fill="#515a63"/>
                        <path d="M445 318l22 12-20 8z" fill="#6f7a82"/>
                    </svg>
                </div>
            </div>

            <div class="bottom">
                <fieldset class="checks">
                    <label><input type="checkbox" checked>小齿轮</label>
                    <label><input type="checkbox" checked>大齿轮</label>
                </fieldset>
                <button type="button" class="btn tight"><svg><use href="#i-doc"/></svg>相关标准</button>
                <button type="button" class="btn tight"><svg><use href="#i-ie"/></svg>网址导航</button>
                <button type="button" class="btn tight"><svg><use href="#i-ie"/></svg>企业推广</button>
                <button type="button" class="btn"><svg><use href="#i-ok"/></svg>确定</button>
                <button type="button" class="btn"><svg><use href="#i-exit"/></svg>退出</button>
            </div>
        </form>
    </div>

    <div class="watermark">
        <svg viewBox="0 0 60 48"><circle cx="30" cy="24" r="23" fill="#fff" opacity="0.600"/><path d="M3 26C2 8 18 0 34 1c12 1 19 9 19 14-5-5-10-6-15-5v24h-9V18L14 34C8 38 4 32 3 26z" fill="#2c8fd8"/><path d="M55 15c6 18-8 34-26 32-12-1-19-8-22-14 5 5 11 6 16 4l9-7v10c12-1 22-11 23-25z" fill="#ee8a3c"/></svg>
        <div>
            <strong>河东软件园</strong>
            <span>www.pc0359.cn</span>
        </div>
    </div>
</body>
</html>
```
FILE: styles.css
```css
* { box-sizing: border-box; }
html, body { height: 100%; margin: 0; overflow: hidden; }
body { font: 12px/14px "Liberation Sans", "Noto Sans CJK SC", sans-serif; color: #000; background: #f0f0f0; }
button, input, select { font: inherit; color: inherit; margin: 0; padding: 0; border-radius: 0; }
.defs { display: none; }
.num { font-family: "Liberation Mono", "Noto Sans CJK SC", monospace; font-size: 11px; }

/* small triangles */
.arr { display: block; width: 0; height: 0; border: 4px solid transparent; }
.arr.up { border-top: 0; border-bottom-color: #444; }
.arr.down { border-bottom: 0; border-top-color: #444; }
.arr.lt { border-left: 0; border-right-color: #444; }
.arr.rt { border-right: 0; border-left-color: #444; }

/* main window */
.app { display: grid; grid-template-rows: 22px 19px 57px 1fr 56px 23px; height: 100vh; }

.titlebar { display: flex; align-items: center; padding-left: 1px; background: linear-gradient(100deg, #d6e0ea 0, #c3ced9 20%, #ccd7e3 32%, #d3dde8 55%, #c2cdd8 63%, #d0dbe7 66%, #c8d3de 75%, #cdd9e5 85%, #dbe5ef 100%); border-bottom: 1px solid #5c6670; }
.gear-ico { width: 16px; height: 16px; margin-right: 4px; }
.app-name { font-size: 13px; }
.win-btns { display: flex; align-self: flex-start; margin-left: auto; border: 1px solid #7a8795; border-top: 0; border-radius: 0 0 4px 4px; overflow: hidden; }
.win-btns button { width: 28px; height: 17px; border: 0; border-right: 1px solid #7a8795; background: linear-gradient(#e3ebf3, #cdd8e4); }
.win-btns button.wide { width: 46px; border-right: 0; }
.win-btns svg { display: block; width: 100%; height: 100%; }
.titlebar .win-btns { margin-right: 3px; }

.menubar { display: flex; align-items: center; gap: 14px; padding-left: 8px; background: linear-gradient(#fff 0, #e9ecf7 45%, #d5dcee 50%, #dfe4f4 100%); border-bottom: 1px solid #a9b4cc; }
.menubar a { color: #6d6d6d; text-decoration: none; white-space: nowrap; }
.menubar .first { margin-right: 3px; }
.mdi-ico { width: 16px; height: 16px; margin-right: -8px; }
.help-search { width: 268px; height: 19px; margin: 0 -14px 0 auto; padding: 0 2px; border: 1px solid #a9a9a9; background: #f0f0f0; }
.help-search::placeholder { color: #666; opacity: 1; }
.help-btns, .mdi-btns { display: flex; }
.help-btns { border: 1px solid #888; border-radius: 4px; overflow: hidden; }
.help-btns button { width: 17px; height: 16px; border: 0; border-left: 1px solid #999; background: #f8f8f8; }
.help-btns .find { width: 28px; border-left: 0; }
.help-btns svg, .mdi-btns svg { display: block; width: 100%; height: 100%; }
.mdi-btns { gap: 1px; margin: 0 1px 0 -11px; }
.mdi-btns button { width: 18px; height: 17px; border: 1px solid #9fc0dd; background: #dceafa; }

.toolbars { display: flex; flex-direction: column; align-items: flex-start; gap: 4px; padding-top: 1px; }
.toolbar { display: flex; align-items: center; border: 1px solid #fff; border-right-color: #999; border-bottom-color: #999; }
.toolbar i { width: 1px; height: 18px; background: #999; }
.toolbar svg { width: 16px; height: 16px; }
.toolbar .wide { width: 26px; }
.std { gap: 7px; width: 654px; height: 26px; padding-left: 14px; }
.props { justify-content: flex-end; gap: 3px; width: 1000px; height: 27px; padding-right: 3px; }
.combo { appearance: none; width: 120px; height: 23px; padding-left: 8px; border: 1px solid #aaa; border-radius: 2px; color: #666; opacity: 1; background: url("data:image/svg+xml,%3Csvg xmlns='http://www.w3.org/2000/svg' width='18' height='20'%3E%3Cpath d='M0 0h18v20H0z' fill='%23fff'/%3E%3Cpath d='M5 8h8l-4 4z' fill='%23999'/%3E%3C/svg%3E") right center no-repeat #f0f0f0; }

.workspace { display: flex; min-height: 0; border-bottom: 2px solid #777; }
.vtools { display: flex; flex-direction: column; align-items: center; align-self: flex-start; gap: 6px; width: 25px; padding: 2px 0 8px; border: 1px solid #fff; border-right-color: #999; border-bottom: 1px solid #999; }
.vtools b { width: 20px; height: 6px; border: 1px solid #aaa; border-width: 1px 0; }
.vtools svg { width: 16px; height: 16px; flex: none; }
.modify { width: 26px; }

.drawing { flex: 1; display: grid; grid-template: 1fr 15px / 1fr 17px; min-width: 0; margin: 0 3px 5px 0; border-top: 2px solid #777; }
.canvas { display: flex; justify-content: flex-end; align-items: flex-start; padding: 30px 3px 0 0; background: #fff; overflow: hidden; }
.drawing .hscroll { grid-column: 1 / 3; }
.vscroll { display: flex; flex-direction: column; align-items: center; gap: 8px; padding: 6px 0; background: #eee; }
.vscroll .down { margin-top: auto; }
.thumb { width: 15px; height: 14px; border: 1px solid #8e8e8e; border-radius: 2px; background: linear-gradient(#f7f7f7, #d0d0d3); }
.hscroll { display: flex; align-items: center; padding-right: 22px; background: #ececec; }
.hscroll .split { width: 4px; height: 12px; margin-left: auto; border: 1px solid #aaa; background: #fff; }
.hscroll .lt { margin: 0 299px 0 7px; }
.hscroll .rt { margin-left: 101px; }

/* parameter block in the drawing */
.cad { width: 465px; table-layout: fixed; border-collapse: collapse; border: 1px solid #000; font: 300 18px/20px Roboto, "Noto Sans CJK SC", sans-serif; text-align: center; }
.cad tr { height: 35px; }
.cad tr:nth-child(odd) { height: 34px; }
.cad th, .cad td { padding: 0; border: 1px solid #f00; }
.cad tr:first-child > * { border-top-color: #000; }
.cad tr:last-child > * { border-bottom-color: #000; }
.cad tr > :last-child { border-right-color: #000; }
.cad tr > th:first-child { border-left-color: #000; }
.cad th { font: 13px/16px "Liberation Mono", "Noto Sans CJK SC", monospace; white-space: nowrap; }
.cad .left { padding-left: 6px; text-align: left; border-left-color: #f00; }
.cad .head { padding-right: 56px; }
.cad .pair { line-height: 34px; }
.cad .roman { font: 17px/20px "Liberation Serif", serif; }
.cad sup { font-size: 10px; line-height: 1px; }
.c30 { width: 30px; }
.c35 { width: 35px; }
.c39 { width: 39px; }
.c40 { width: 40px; }
.c49 { width: 49px; }
.c60 { width: 60px; }

.command { display: grid; grid-template: 25px 1fr / 6px 1fr 17px; column-gap: 6px; padding: 8px 8px 3px 5px; border-bottom: 1px solid #999; }
.grip { grid-row: 1 / 3; border: 1px solid #aaa; border-width: 0 1px 1px; }
.cmd-box { display: grid; grid-template-rows: 24px 1fr; grid-row: 1 / 3; grid-column: 2; margin-right: -6px; border: 1px solid #777; border-width: 1px 0 0 1px; background: #fff; }
.cmd-box label { padding: 3px 1px; font-family: "Liberation Mono", "Noto Sans CJK SC", monospace; }
.cmd-box input { min-width: 0; padding: 0 2px; border: 0; border-top: 1px solid #999; }
.cmd-scroll { display: flex; flex-direction: column; align-items: center; justify-content: space-between; grid-column: 3; padding: 4px 0; background: #eee; }
.cmd-hscroll { display: flex; grid-column: 2 / 4; grid-row: 2; justify-self: end; align-items: center; justify-content: space-between; width: 85px; margin-top: 1px; padding: 0 22px 0 6px; background: #eee; }

.status { display: flex; align-items: center; padding: 3px 4px 0 6px; white-space: nowrap; background: #f0eded; border-top: 1px solid #999; border-bottom: 2px solid #30343a; }
.coords { width: 198px; height: 19px; margin: 0 4px 0 3px; padding: 2px 1px; border: 1px solid #999; border-right-color: #fff; font-family: "Liberation Mono", monospace; font-size: 11px; }
.modes { display: flex; gap: 4px; }
.modes button { height: 18px; padding: 0 1px; border: 1px solid #fff; border-right-color: #999; border-bottom: 0; background: #f0eded; }
.modes .num { padding: 0; }
.modes .on { border-color: #222 #fff #fff #222; }
.scale { display: flex; align-items: center; gap: 6px; margin-left: auto; }
.tray { display: flex; align-items: center; gap: 9px; margin-left: 12px; }
.tray svg { width: 16px; height: 16px; }

/* dialog window */
.dialog { position: absolute; left: 10px; top: 59px; width: 839px; padding: 0 7px 6px; border: 1px solid #1c242c; border-radius: 7px; background: linear-gradient(100deg, #dce9f6 0, #b5cfea 8%, #a9c6e4 14%, #bdd6ee 35%, #a9c5e2 42%, #b7d2ed 70%, #a9c6e4 85%, #cfe0f2 100%); box-shadow: 0 0 12px 5px rgba(0, 0, 0, 0.65), inset 0 0 0 1px #e8f2fb; }
.dlg-title { display: flex; align-items: center; gap: 5px; height: 27px; }
.dlg-title > svg { width: 16px; height: 14px; }
.dlg-title .win-btns button { height: 18px; background: linear-gradient(#dfeaf5 0, #c5d6e8 45%, #a8bfd8 50%, #c3d5e8 100%); }
.dlg-title .win-btns .close { background: linear-gradient(#e6a79c 0, #cf6a5b 45%, #b8352a 50%, #d86a4c 100%); }
.client { padding: 4px 6px 4px 4px; border: 1px solid #4f6070; background: #f0f0f0; }
.cols { display: flex; gap: 8px; }
.left { width: 463px; }
.previews { flex: 1; display: flex; flex-direction: column; align-items: flex-end; gap: 35px; padding-top: 7px; }
.previews svg { display: block; width: 341px; height: 248px; background: linear-gradient(#5fb3ff, #fdfeff); }
.c1-text { font: italic 20px "Liberation Serif", serif; fill: #e00000; }

fieldset { min-width: 0; margin: 0; padding: 0 5px; border: 1px solid #d3dce4; border-radius: 4px; box-shadow: inset 1px 0 #fff; }
legend { margin-left: 1px; padding: 0 2px; }
.client input:not([type]) { width: 52px; height: 21px; padding: 0 0 3px 2px; border: 1px solid #dfe3ec; border-top-color: #a5a5a8; background: #fff; font-family: "Liberation Mono", monospace; font-size: 11px; }
.client select { appearance: none; width: 48px; height: 20px; padding: 0 2px; border: 1px solid #707070; border-radius: 3px; font-family: "Liberation Mono", "Noto Sans CJK SC", monospace; font-size: 11px; background: url("data:image/svg+xml,%3Csvg xmlns='http://www.w3.org/2000/svg' width='16' height='16'%3E%3Cpath d='M4 7h8l-4 4z'/%3E%3C/svg%3E") right center no-repeat, linear-gradient(#f3f3f3 0, #ebebeb 50%, #dadada 51%, #cfcfcf 100%); }
.client .type select { width: 144px; font-size: 12px; }
input[type="radio"] { appearance: none; width: 12px; height: 12px; margin-right: 4px; border: 1px solid #8e8f8f; border-radius: 50%; background: radial-gradient(#fff, #ddd); }
input[type="radio"]:checked { background: radial-gradient(circle, #5fd0ff 0, #125b96 3px, #eee 4px); }
input[type="checkbox"] { appearance: none; width: 13px; height: 13px; margin-right: 3px; border: 1px solid #8e8f8f; background: url("data:image/svg+xml,%3Csvg xmlns='http://www.w3.org/2000/svg' width='11' height='11'%3E%3Cpath d='M2 5l2 4 5-8' fill='none' stroke='%2331479c' stroke-width='2'/%3E%3C/svg%3E") #eef; }

.params { display: flex; gap: 9px; }
.known { display: flex; flex-direction: column; width: 300px; padding-bottom: 8px; }
.row { display: flex; align-items: center; }
.row label { display: flex; align-items: center; white-space: nowrap; }
.type > label { width: 38px; }
.modulus { gap: 8px; width: 231px; margin: 5px 0 6px; }
.modulus > span { width: 28px; }
.client .modulus select { width: 52px; margin-left: auto; }
.teeth { display: grid; grid-template-columns: 107px 52px 59px 52px; row-gap: 10px; white-space: nowrap; line-height: 20px; }
.teeth .second { padding-left: 8px; }
.teeth .calc { grid-column: 3 / 5; }
.hints { display: grid; grid-template-columns: 89px 78px 1fr; margin: 4px 0 6px; line-height: 18px; white-space: nowrap; }
.hints .calc { grid-row: 1 / 3; grid-column: 3; align-self: center; }
.helix label { width: 72px; }
.helix span + select { margin-left: 6px; }
.helix > span { margin-left: 3px; }
.group { display: grid; grid-template-columns: 65px 69px 74px 48px; row-gap: 7px; align-items: center; width: 277px; margin: 5px 0 0 -2px; padding: 2px 8px 6px; }
.group span { padding-left: 2px; }
.side { flex: 1; display: flex; flex-direction: column; gap: 9px; margin-right: 3px; }
.side fieldset { flex: 1; padding: 52px 0 0 12px; }
.side legend { margin-left: -6px; }
.side label { width: 30px; }
.client .side input { width: 68px; margin-right: 12px; }

.actions { align-items: flex-start; height: 25px; margin-top: 8px; padding-left: 6px; }
.actions > label { width: 48px; line-height: 20px; }
.client .actions input { width: 60px; }
.spin { display: flex; flex-direction: column; gap: 1px; margin: 1px 112px 0 4px; }
.spin button { display: flex; align-items: center; justify-content: center; width: 15px; height: 9px; border: 1px solid #a5a5ab; background: #f3f3f3; }
.spin .up { border-bottom-color: #56679c; }
.spin .down { border-top-color: #56679c; }
.btn { display: flex; align-items: center; justify-content: center; gap: 12px; width: 78px; height: 26px; border: 1px solid #fff; border-right: 2px solid #696969; border-bottom: 2px solid #696969; background: #f0f0f0; white-space: nowrap; }
.btn svg { width: 16px; height: 18px; }
.btn.tight { gap: 0; }
.actions .btn { width: 75px; margin-top: 2px; gap: 4px; }
.actions .calc-btn { margin-right: 54px; gap: 11px; }

.tabs { display: flex; align-items: flex-end; height: 20px; }
.tabs button { height: 18px; padding: 0 4px; border: 1px solid #898c95; border-bottom: 0; background: linear-gradient(#f2f2f2, #d8d8d8); }
.tabs [aria-selected="true"] { height: 20px; padding: 0 6px; background: #fff; }
.panel { padding: 5px 6px 2px; border: 1px solid #898c95; border-right-color: #fff; }
.list { display: flex; height: 193px; padding: 1px; border: 1px solid #777; outline: 1px solid #aaa; background: #fff; }
.rows { flex: 1; overflow: hidden; }
.list .vscroll { width: 16px; gap: 4px; }
.list .thumb { display: flex; height: 80px; background: linear-gradient(90deg, #f5f5f5, #cfcfd2); }
.list .thumb::before { content: ""; width: 7px; height: 7px; margin: auto; background: repeating-linear-gradient(#555 0, #555 1px, transparent 1px, transparent 3px); }
.grid { width: 100%; table-layout: fixed; border-collapse: collapse; line-height: 14px; text-align: left; }
.grid th { font-weight: normal; }
.grid thead th { height: 25px; padding: 1px 0 0 5px; border-right: 1px solid #dcdfe3; border-bottom: 2px solid #d5d5d5; background: linear-gradient(#fff 50%, #f1f2f4); }
.w-no { width: 31px; }
.w-name { width: 150px; }
.w-col { width: 80px; }
.grid tbody tr { height: 16px; }
.grid td { padding: 0 0 0 5px; border: 1px solid #ececec; }
.grid tbody th { padding: 0; border: 1px solid #555; border-left-color: #fff; text-align: center; background: #f0f0f0; }
.grid td:nth-child(n+3), .grid tbody th { font-family: "Liberation Mono", "Noto Sans CJK SC", monospace; font-size: 11px; }

.bottom { display: flex; align-items: flex-end; gap: 12px; margin-top: 9px; }
.checks { display: flex; align-items: center; gap: 32px; width: 323px; height: 28px; margin-right: 18px; padding-left: 77px; }
.checks label { display: flex; align-items: center; }

/* site mark */
.watermark { position: absolute; left: 5px; top: 19px; display: flex; gap: 3px; opacity: 0.85; pointer-events: none; }
.watermark svg { width: 58px; height: 48px; }
.watermark strong, .watermark span { display: block; }
.watermark strong { font-size: 27px; line-height: 26px; color: #3a9ce6; }
.watermark span { margin-top: 3px; font: bold 19px/18px "Liberation Serif", serif; color: #3aa048; }
```
